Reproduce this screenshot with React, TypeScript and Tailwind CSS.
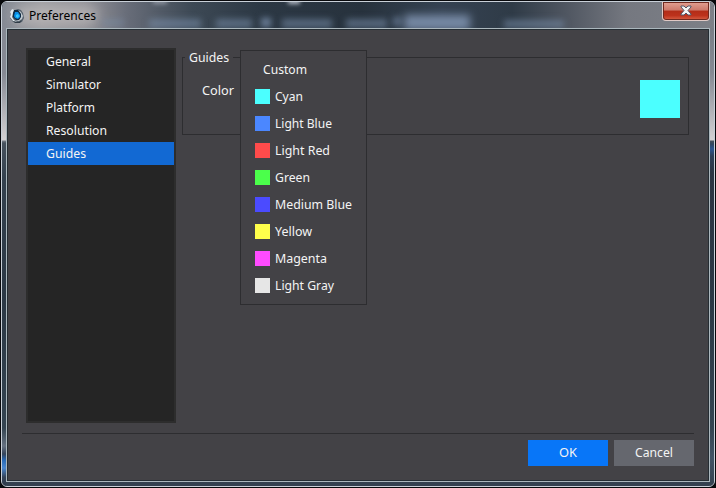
import React from 'react';

const sections = [
  { name: 'General', width: 45 },
  { name: 'Simulator', width: 55 },
  { name: 'Platform', width: 49 },
  { name: 'Resolution', width: 61 },
  { name: 'Guides', width: 40 },
];

const colors = [
  { name: 'Cyan', swatch: 'bg-[#4bffff]', width: 28 },
  { name: 'Light Blue', swatch: 'bg-[#4b87ff]', width: 57 },
  { name: 'Light Red', swatch: 'bg-[#ff4b4b]', width: 55 },
  { name: 'Green', swatch: 'bg-[#4bff4b]', width: 35 },
  { name: 'Medium Blue', swatch: 'bg-[#4b4bff]', width: 77 },
  { name: 'Yellow', swatch: 'bg-[#ffff4b]', width: 37 },
  { name: 'Magenta', swatch: 'bg-[#ff4bff]', width: 52 },
  { name: 'Light Gray', swatch: 'bg-[#e6e6e6]', width: 59 },
];

function AppIcon() {
  return (
    <svg width="16" height="16" viewBox="0 0 16 16" className="mt-px shrink-0">
      <path d="M3 1l3 1 3-1 3 1 2 3 1 5-2 4-4 1-5-1-3-4 1-4-1-2z" fill="#56616c" />
      <path d="M3 1l3 1-2 3-1 4 2 3 3 2-4-1-3-4 1-3-1-2z" fill="#e3e9ed" />
      <path d="M9 2l3 2 2 4-1 3-3 2-4-1 4-1 2-3-1-3z" fill="#c0c9d0" />
      <path d="M5 2h4l3 4v3l-2 3H7L4 9V5z" fill="#0e2a42" />
      <path d="M6 4l3 0 2 3 0 2-2 2-3-1-1-2z" fill="#078de9" />
      <path d="M7 7l2-1 1 2-1 2-2-1z" fill="#35caff" />
      <path d="M4 13l3 1h3l3-2-2 3H6z" fill="#303c47" />
    </svg>
  );
}

function CloseButton() {
  return (
    <button className="flex h-[19px] w-[48px] items-center justify-center rounded-b-[4px] border border-t-0 border-[#e0c9c5] bg-[linear-gradient(#e3a193_0%,#cd796b_45%,#b32d18_50%,#bd321c_75%,#d86146_100%)] shadow-[inset_0_0_0_1px_#70291f]">
      <svg width="12" height="11" viewBox="0 0 12 11" className="-mt-px">
        <path d="M1 1h3l2 2 2-2h3v1L8 5.5 11 9v1H8L6 8l-2 2H1V9l3-3.5L1 2z" fill="#f5f5f5" stroke="#505668" strokeWidth="1" />
      </svg>
    </button>
  );
}

/* Blurred desktop content showing through the glass title bar. */
function GlassReflections() {
  return (
    <div className="absolute inset-0">
      <div className="absolute top-[5px] left-[12px] h-[17px] w-[84px] rounded-full bg-[#bdbabb]/70 blur-[6px]" />
      <div className="absolute top-[17px] left-[100px] h-[7px] w-[22px] bg-[#7a90ad]/40 blur-[3px]" />
      <div className="absolute top-[17px] left-[147px] h-[9px] w-[52px] bg-[#7a90ad]/55 blur-[3px]" />
      <div className="absolute top-[17px] left-[214px] h-[9px] w-[36px] bg-[#7a90ad]/55 blur-[3px]" />
      <div className="absolute top-[16px] left-[259px] h-[9px] w-[10px] bg-[#7a90ad]/80 blur-[3px]" />
      <div className="absolute top-[17px] left-[280px] h-[9px] w-[50px] bg-[#7a90ad]/55 blur-[3px]" />
      <div className="absolute top-[17px] left-[344px] h-[9px] w-[41px] bg-[#7a90ad]/55 blur-[3px]" />
      <div className="absolute top-[15px] left-[391px] h-[9px] w-[8px] bg-[#7a90ad]/60 blur-[3px]" />
      <div className="absolute top-[13px] left-[402px] h-[15px] w-[66px] bg-[#8296b4]/85 blur-[4px]" />
      <div className="absolute top-[18px] left-[502px] h-[8px] w-[60px] bg-[#7a90ad]/55 blur-[3px]" />
      <div className="absolute -top-[3px] left-[286px] h-[5px] w-[12px] bg-[#b4bbc6] blur-[2px]" />
      <div className="absolute -top-[3px] left-[151px] h-[5px] w-[14px] bg-[#b4bbc6]/60 blur-[2px]" />
    </div>
  );
}

function TitleBar() {
  return (
    <header className="relative flex h-[26px] shrink-0 overflow-hidden rounded-t-[5px] bg-[linear-gradient(90deg,#858a94_0px,#a09fa3_40px,#949399_82px,#686d79_125px,#3d4955_190px,#2c3844_260px,#27323d_360px,#354252_440px,#2f3b47_510px,#4d545f_560px,#757880_625px,#7d8087_714px)]">
      <GlassReflections />
      <div className="relative flex min-w-0 flex-1 items-start pt-[5px] pl-[7px]">
        <AppIcon />
        <h1 className="ml-[4px] text-[12px] leading-[16px] text-black">
          <svg width="69" height="18" className="overflow-visible">
            <text x="0" y="12.5" textLength="67" lengthAdjust="spacingAndGlyphs" fill="currentColor">Preferences</text>
          </svg>
        </h1>
      </div>
      <div className="relative pr-[4px]"><CloseButton /></div>
    </header>
  );
}

function Label({ children, width }: { children: string; width: number }) {
  return (
    <svg width={width} height="18" className="shrink-0 overflow-visible">
      <text x="0" y="13" textLength={width} lengthAdjust="spacingAndGlyphs" fill="currentColor">{children}</text>
    </svg>
  );
}

function ColorMenu() {
  return (
    <div className="absolute top-[21px] left-[233px] h-[255px] w-[127px] border border-[#2d2d30] bg-[#434246] pt-[5px]">
      <div className="flex h-[27px] items-center pl-[22px]"><Label width={44}>Custom</Label></div>
      {colors.map((color) => (
        <div key={color.name} className="flex h-[27px] items-center pl-[14px]">
          <span className={`mr-[5px] h-[15px] w-[15px] ${color.swatch}`} />
          <Label width={color.width}>{color.name}</Label>
        </div>
      ))}
    </div>
  );
}

export default function App() {
  return (
    <div className="h-[488px] w-[716px] overflow-hidden bg-[#08090c] p-px font-['Noto_Sans','Open_Sans',sans-serif] text-[13px] text-[#f4f4f4]">
      <main className="flex h-[486px] w-[714px] flex-col overflow-hidden rounded-[6px] border border-[#c9d0d8] bg-[#344150]">
        <TitleBar />
        <div className="flex min-h-0 flex-1">
          <div className="w-[4px] shrink-0 bg-[linear-gradient(#858993_0px,#858993_45px,#d3d1d3_112px,#737a84_113px,#46515d_115px,#34414e_150px,#2b3845_270px,#344451_400px,#657181_418px,#34445a_426px,#2869b5_432px,#4a86ce_440px,#34445a_449px,#2d3948_458px)]" />
          <section className="relative mb-[4px] flex min-w-0 flex-1 flex-col border border-[#abb7bd] bg-[#434246] shadow-[inset_0_0_0_1px_#252d33]">
            <div className="flex h-[404px] shrink-0 pt-[19px] pl-[19px]">
              <nav className="h-[375px] w-[150px] border-2 border-[#2d2d2d] bg-[#252525]">
                {sections.map((section) => (
                  <div key={section.name} className={section.name === 'Guides' ? 'flex h-[23px] items-center bg-[#1269d3] pl-[18px]' : 'flex h-[23px] items-center pl-[18px]'}>
                    <Label width={section.width}>{section.name}</Label>
                  </div>
                ))}
              </nav>
              <fieldset className="ml-[6px] h-[87px] w-[507px] border border-[#2d2d30]">
                <legend className="ml-[2px] flex h-[19px] w-[48px] items-center pl-[4px]"><Label width={40}>Guides</Label></legend>
                <div className="flex items-start justify-between pr-[8px] pl-[19px]">
                  <div className="pt-[15px]"><Label width={32}>Color</Label></div>
                  <div className="mt-[13px] h-[38px] w-[40px] bg-[#4bffff]" />
                </div>
              </fieldset>
            </div>
            <footer className="mx-[15px] flex justify-end gap-[6px] border-t border-[#2d2d30] pt-[6px]">
              <button className="flex h-[26px] w-[80px] items-center justify-center bg-[#0876f8]"><Label width={18}>OK</Label></button>
              <button className="flex h-[26px] w-[80px] items-center justify-center bg-[#65676e]"><Label width={38}>Cancel</Label></button>
            </footer>
            <ColorMenu />
          </section>
          <div className="w-[4px] shrink-0 bg-[linear-gradient(#7a7e86_0px,#858993_45px,#d3d1d3_112px,#46515d_113px,#31465f_116px,#2d5590_121px,#2f4058_128px,#2b3543_145px,#2b3845_270px,#344451_400px,#415365_430px,#34414f_458px)]" />
        </div>
      </main>
    </div>
  );
}
